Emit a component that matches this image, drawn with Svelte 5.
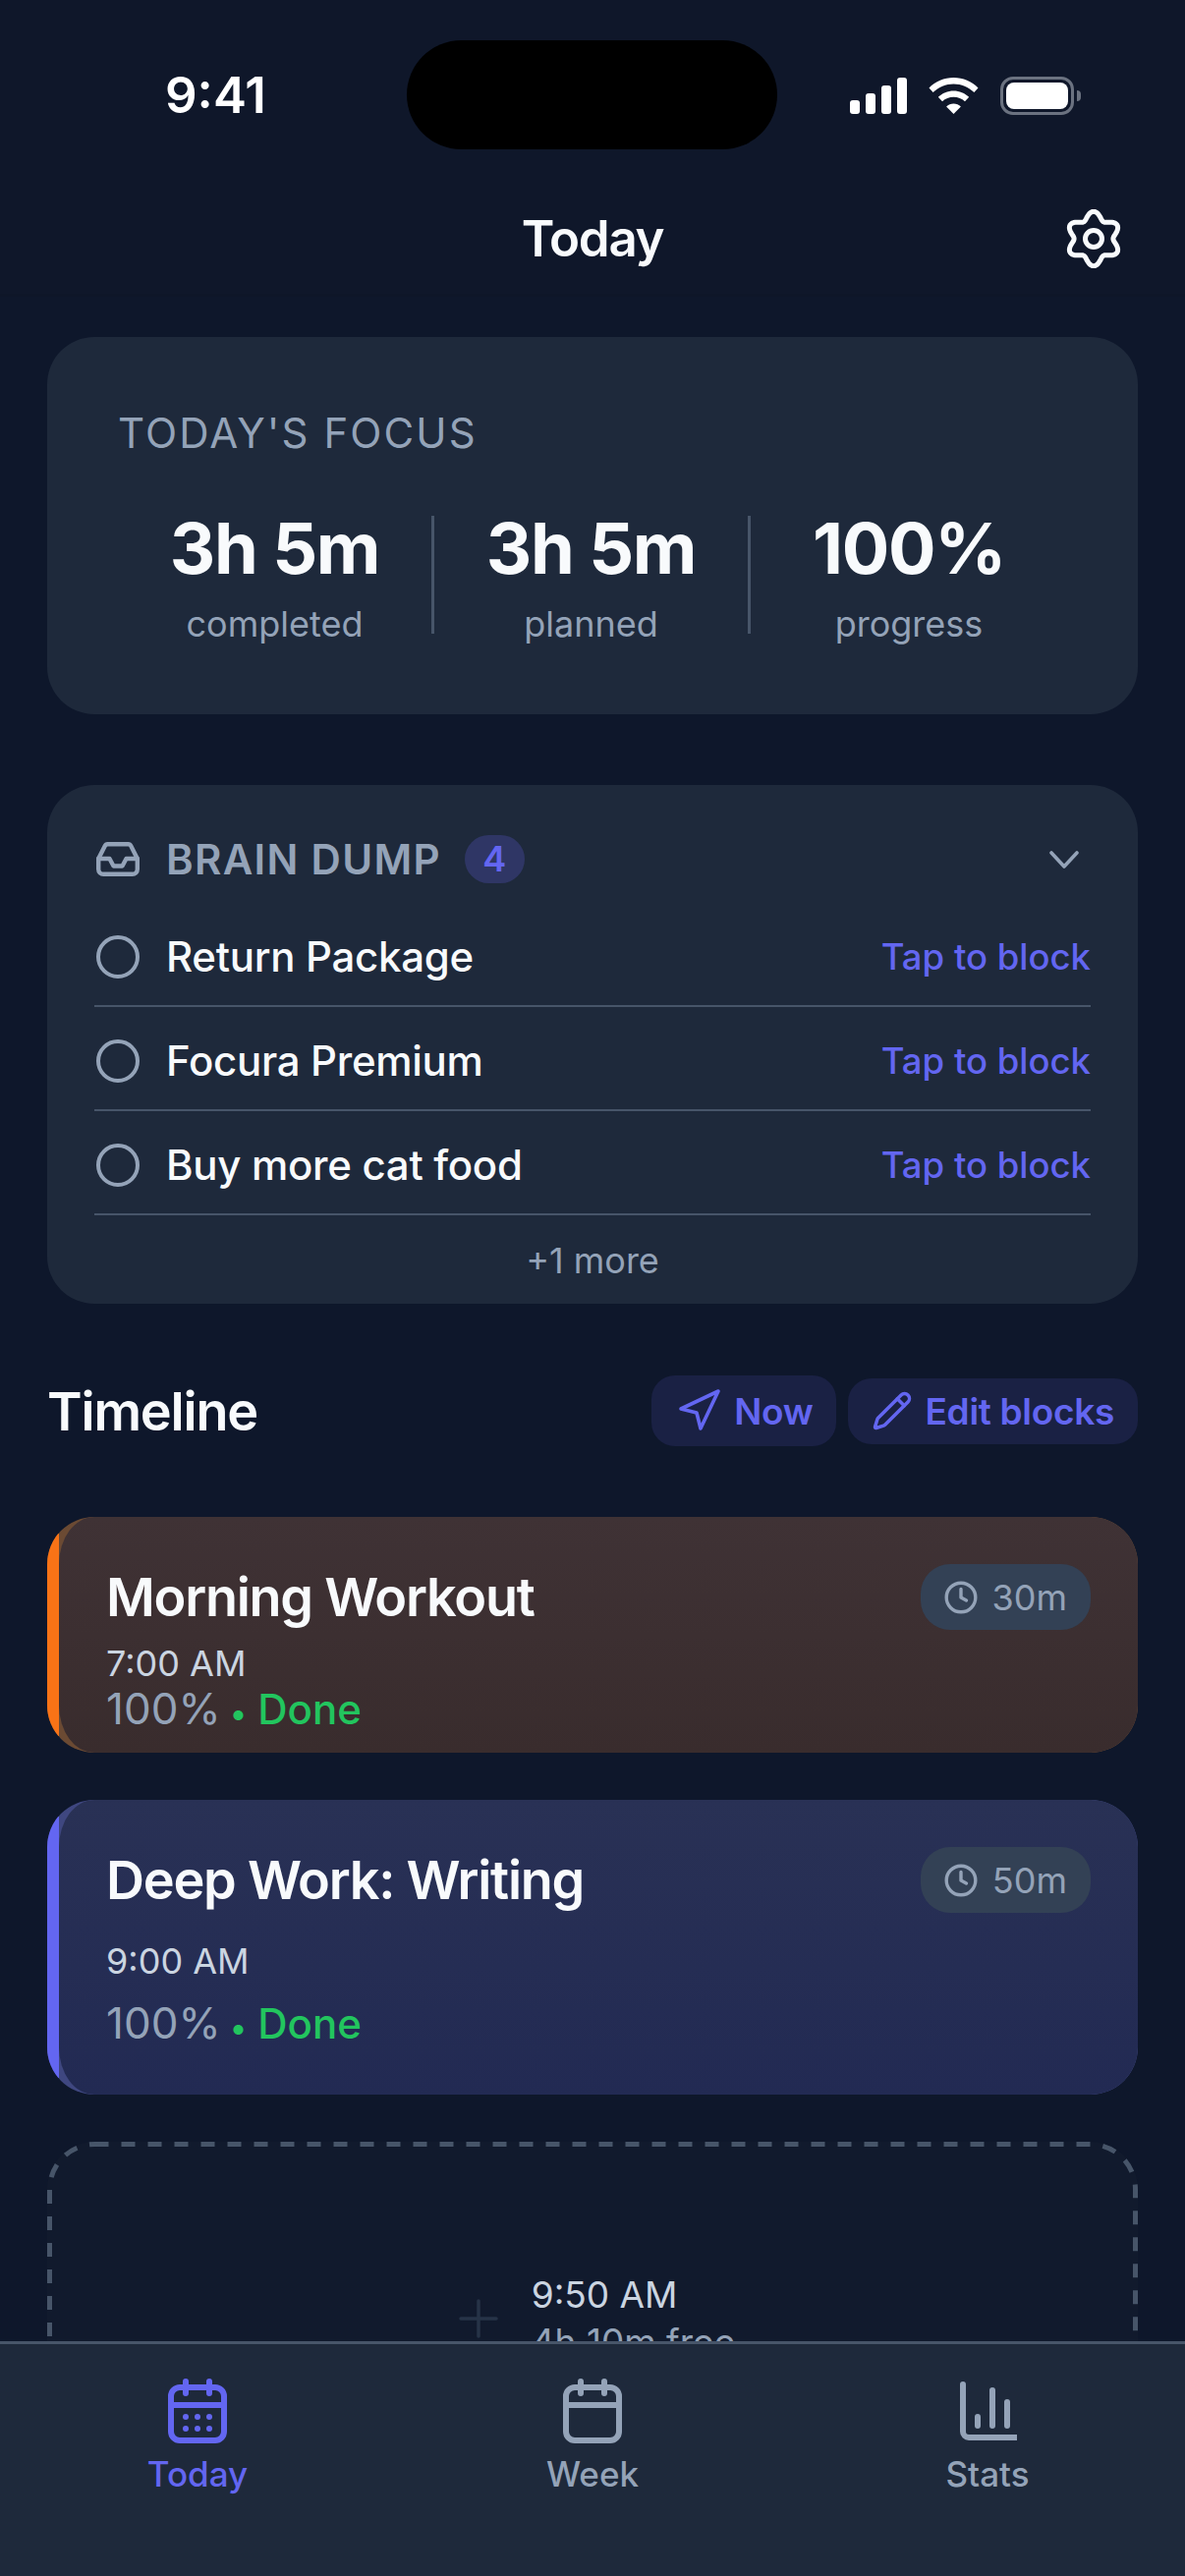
<script>
	const stats = [
		{ value: '3h 5m', label: 'completed' },
		{ value: '3h 5m', label: 'planned' },
		{ value: '100%', label: 'progress' }
	];
	const dumps = ['Return Package', 'Focura Premium', 'Buy more cat food'];

	// six lobed gear outline, lobes at top and bottom
	function gearPath() {
		const pts = [];
		for (let i = 0; i < 120; i++) {
			const t = (i / 120) * Math.PI * 2;
			const r = 23.8 + 3.9 * Math.cos(6 * t);
			pts.push((30 + r * Math.sin(t)).toFixed(2) + ' ' + (30 - r * Math.cos(t)).toFixed(2));
		}
		return 'M' + pts.join('L') + 'Z';
	}
	const gear = gearPath();
</script>

{#snippet clock()}
	<svg class="clock" viewBox="0 0 34 34" fill="none" stroke="currentColor" stroke-width="3.4" stroke-linecap="round" stroke-linejoin="round">
		<circle cx="17" cy="17" r="14.8" />
		<path d="M17 8.5V17l5.5 3" />
	</svg>
{/snippet}

<div class="phone">
	<div class="status">
		<span class="time">9:41</span>
		<div class="island"></div>
		<div class="status-icons">
			<svg width="58" height="37" viewBox="0 0 58 37" fill="#fff">
				<rect x="0" y="23" width="10" height="14" rx="3" />
				<rect x="16" y="16" width="10" height="21" rx="3" />
				<rect x="32" y="8" width="10" height="29" rx="3" />
				<rect x="48" y="0" width="10" height="37" rx="3" />
			</svg>
			<svg width="51" height="37" viewBox="0 0 51 37" fill="#fff">
				<path d="M25.5 0C35 0 44 3.8 50.5 10.5L46.4 15C40.8 9.5 33.4 6.4 25.5 6.4S10.2 9.5 4.6 15L.5 10.5C7 3.8 16 0 25.5 0z" />
				<path d="M25.5 13.4c6 0 11.5 2.3 15.7 6.4l-4.2 4.5c-3-3-7.1-4.6-11.5-4.6s-8.500 1.600-11.500 4.600l-4.200-4.500C14 15.700 19.500 13.400 25.500 13.400z" />
				<path d="M25.500 26.500c2.800 0 5.400 1 7.400 2.900L25.500 37l-7.400-7.600c2-1.900 4.600-2.900 7.400-2.900z" />
			</svg>
			<div class="battery"><div class="battery-fill"></div></div>
			<div class="battery-cap"></div>
		</div>
	</div>

	<header class="nav">
		<h1>Today</h1>
		<svg class="gear" viewBox="0 0 60 60" fill="none" stroke="#f8fafc" stroke-width="5">
			<path d={gear} stroke-linejoin="round" />
			<circle cx="30" cy="30" r="8.5" />
		</svg>
	</header>

	<main class="scroll">
		<section class="card focus">
			<div class="focus-title">TODAY'S FOCUS</div>
			<div class="stats">
				{#each stats as s}
					<div class="stat">
						<div class="stat-value">{s.value}</div>
						<div class="stat-label">{s.label}</div>
					</div>
				{/each}
			</div>
		</section>

		<section class="card dump">
			<div class="dump-head">
				<svg class="inbox" viewBox="0 0 44 35" fill="none" stroke="#94a3b8" stroke-width="4.4" stroke-linejoin="round" stroke-linecap="round">
					<path d="M11.500 2.200h21a3 3 0 0 1 2.700 1.700L41.800 17v10.800a5 5 0 0 1-5 5H7.200a5 5 0 0 1-5-5V17L8.800 3.900a3 3 0 0 1 2.700-1.700z" />
					<path d="M2.200 17h11.300l4 7.500h9l4-7.500h11.300" />
				</svg>
				<span class="dump-title">BRAIN DUMP</span>
				<span class="badge">4</span>
				<svg class="chevron" viewBox="0 0 30 18" fill="none" stroke="#94a3b8" stroke-width="3.6" stroke-linecap="round" stroke-linejoin="round">
					<path d="M2 2l13 14L28 2" />
				</svg>
			</div>
			{#each dumps as d}
				<div class="dump-row">
					<span class="radio"></span>
					<span class="dump-name">{d}</span>
					<span class="tap">Tap to block</span>
				</div>
			{/each}
			<div class="more">+1 more</div>
		</section>

		<div class="timeline-head">
			<h2>Timeline</h2>
			<div class="actions">
				<button class="act now">
					<svg width="48" height="48" viewBox="0 0 24 24" fill="none" stroke="currentColor" stroke-width="1.800" stroke-linecap="round" stroke-linejoin="round">
						<polygon points="3 11 22 2 13 21 11 13 3 11" />
					</svg>
					Now
				</button>
				<button class="act edit">
					<svg width="42" height="42" viewBox="0 0 24 24" fill="none" stroke="currentColor" stroke-width="2" stroke-linecap="round" stroke-linejoin="round">
						<path d="M21.174 6.812a1 1 0 0 0-3.986-3.987L3.842 16.174a2 2 0 0 0-.5.83l-1.321 4.352a.5.5 0 0 0 .623.622l4.353-1.32a2 2 0 0 0 .83-.497z" />
						<path d="m15 5 4 4" />
					</svg>
					Edit blocks
				</button>
			</div>
		</div>

		<article class="block workout">
			<span class="accent"></span>
			<div class="block-body">
				<div class="block-top">
					<div class="block-title">Morning Workout</div>
					<div class="pill">{@render clock()}<span>30m</span></div>
				</div>
				<div class="block-time">7:00 AM</div>
				<div class="block-progress"><span class="pct">100%</span> <i>•</i> <b>Done</b></div>
			</div>
		</article>

		<article class="block writing">
			<span class="accent"></span>
			<div class="block-body">
				<div class="block-top">
					<div class="block-title">Deep Work: Writing</div>
					<div class="pill">{@render clock()}<span>50m</span></div>
				</div>
				<div class="block-time">9:00 AM</div>
				<div class="block-progress"><span class="pct">100%</span> <i>•</i> <b>Done</b></div>
			</div>
		</article>

		<div class="free">
			<svg class="dashes" viewBox="0 0 1110 360" fill="none">
				<rect x="2.500" y="2.500" width="1105" height="355" rx="46" stroke="#475569" stroke-width="5" stroke-dasharray="14 13" />
			</svg>
			<svg class="plus" viewBox="0 0 42 42" stroke="#263347" stroke-width="3.500" stroke-linecap="round">
				<path d="M21 3v36M3 21h36" />
			</svg>
			<div class="free-text">
				<div class="free-time">9:50 AM</div>
				<div class="free-len">4h 10m free</div>
			</div>
		</div>
	</main>

	<nav class="tabs">
		<div class="tab active">
			<svg width="60" height="66" viewBox="0 0 60 66" fill="none" stroke="currentColor" stroke-width="6" stroke-linecap="round">
				<rect x="3" y="9" width="54" height="54" rx="9" />
				<path d="M18 3v12M42 3v12" />
				<path d="M3 27h54" stroke-linecap="butt" />
				<g fill="currentColor" stroke="none">
					<circle cx="18" cy="39" r="3" /><circle cx="30" cy="39" r="3" /><circle cx="42" cy="39" r="3" />
					<circle cx="18" cy="51" r="3" /><circle cx="30" cy="51" r="3" /><circle cx="42" cy="51" r="3" />
				</g>
			</svg>
			<span>Today</span>
		</div>
		<div class="tab">
			<svg width="60" height="66" viewBox="0 0 60 66" fill="none" stroke="currentColor" stroke-width="6" stroke-linecap="round">
				<rect x="3" y="9" width="54" height="54" rx="9" />
				<path d="M18 3v12M42 3v12" />
				<path d="M3 27h54" stroke-linecap="butt" />
			</svg>
			<span>Week</span>
		</div>
		<div class="tab">
			<svg width="60" height="66" viewBox="0 0 60 66" fill="none" stroke="currentColor" stroke-width="6" stroke-linecap="round">
				<path d="M5 6v48a6 6 0 0 0 6 6h48" stroke-linejoin="round" />
				<path d="M20 39v9M35 12v36M50 24v24" />
			</svg>
			<span>Stats</span>
		</div>
	</nav>
</div>

<style>
	:global(body) {
		margin: 0;
		background: #0f172a;
	}

	.phone {
		width: 1206px;
		height: 2622px;
		display: flex;
		flex-direction: column;
		position: relative;
		overflow: hidden;
		background: #0f172a;
		color: #f8fafc;
		font-family: Inter, 'Noto Sans', sans-serif;
	}

	/* status bar */
	.status {
		height: 184px;
		flex-shrink: 0;
		display: flex;
		justify-content: space-between;
		align-items: flex-start;
		padding: 66px 106px 0 168px;
		box-sizing: border-box;
	}

	.time {
		font-size: 51px;
		line-height: 62px;
		font-weight: 600;
		color: #fff;
	}

	.island {
		position: absolute;
		left: 414px;
		top: 41px;
		width: 377px;
		height: 111px;
		border-radius: 56px;
		background: #000;
	}

	.status-icons {
		display: flex;
		align-items: center;
		margin-top: 12px;
		gap: 22px;
	}

	.battery {
		width: 75px;
		height: 39px;
		box-sizing: border-box;
		border: 3px solid #6b7280;
		border-radius: 13px;
		padding: 3px;
	}

	.battery-fill {
		height: 100%;
		background: #fff;
		border-radius: 8px;
	}

	.battery-cap {
		width: 4px;
		height: 11px;
		margin-left: -19px;
		background: #6b7280;
		border-radius: 0 4px 4px 0;
	}

	.nav {
		height: 118px;
		flex-shrink: 0;
		position: relative;
		display: flex;
		align-items: center;
		justify-content: center;
		border-bottom: 3px solid #0e1628;
		box-sizing: border-box;
		padding-top: 3px;
	}

	.nav h1 {
		margin: 0;
		font-size: 51px;
		font-weight: 600;
		line-height: 62px;
		letter-spacing: -1.3px;
	}

	.gear {
		position: absolute;
		right: 63px;
		top: 29px;
		width: 60px;
		height: 60px;
	}

	.scroll {
		flex: 1;
		min-height: 0;
		overflow: hidden;
		padding: 41px 48px 0;
		background: #0e172b;
	}

	.card {
		background: #1e293b;
		border-radius: 48px;
	}

	/* today's focus */
	.focus {
		height: 384px;
		box-sizing: border-box;
		padding: 72px 72px 0;
	}

	.focus-title {
		font-size: 42px;
		line-height: 51px;
		letter-spacing: 2.100px;
		color: #94a3b8;
	}

	.stats {
		display: grid;
		grid-template-columns: repeat(3, 1fr);
		margin: 59px 0 0;
		width: 966px;
	}

	.stat {
		height: 120px;
		text-align: center;
		border-right: 3px solid #475569;
	}

	.stat:last-child {
		border-right: none;
	}

	.stat-value {
		font-size: 72px;
		line-height: 66px;
		font-weight: 700;
		letter-spacing: -1.300px;
		color: #f8fafc;
	}

	.stat-label {
		margin-top: 20px;
		font-size: 36px;
		line-height: 48px;
		color: #94a3b8;
	}

	/* brain dump */
	.dump {
		margin-top: 72px;
		height: 528px;
		box-sizing: border-box;
		padding: 51px 48px 0;
	}

	.dump-head {
		display: flex;
		align-items: center;
		height: 49px;
		margin-bottom: 20px;
	}

	.inbox {
		width: 44px;
		height: 35px;
		margin-left: 2px;
	}

	.dump-title {
		margin-left: 27px;
		font-size: 42px;
		font-weight: 600;
		letter-spacing: 1.300px;
		color: #94a3b8;
	}

	.badge {
		margin-left: 24px;
		width: 61px;
		height: 49px;
		border-radius: 25px;
		background: #2f3665;
		color: #6366f1;
		font-size: 36px;
		font-weight: 600;
		line-height: 49px;
		text-align: center;
	}

	.chevron {
		width: 30px;
		height: 18px;
		margin-left: auto;
		margin-right: 12px;
	}

	.dump-row {
		display: flex;
		align-items: center;
		height: 106px;
		box-sizing: border-box;
		border-bottom: 2px solid #475569;
		padding-top: 5px;
	}

	.radio {
		width: 44px;
		height: 44px;
		margin-left: 2px;
		box-sizing: border-box;
		border: 4px solid #94a3b8;
		border-radius: 50%;
	}

	.dump-name {
		margin-left: 27px;
		font-size: 42px;
		font-weight: 500;
		letter-spacing: -0.300px;
		color: #f8fafc;
	}

	.tap {
		margin-left: auto;
		font-size: 36.500px;
		font-weight: 500;
		color: #6366f1;
	}

	.more {
		margin-top: 22px;
		text-align: center;
		font-size: 36px;
		line-height: 48px;
		color: #94a3b8;
	}

	/* timeline */
	.timeline-head {
		display: flex;
		justify-content: space-between;
		align-items: center;
		margin-top: 73px;
		height: 72px;
	}

	.timeline-head h2 {
		margin: 0;
		font-size: 54px;
		font-weight: 600;
		letter-spacing: -1.200px;
		color: #f8fafc;
	}

	.actions {
		display: flex;
		align-items: center;
		gap: 12px;
	}

	.act {
		display: flex;
		align-items: center;
		gap: 12px;
		padding: 0 24px;
		border: none;
		border-radius: 24px;
		background: #1a2144;
		color: #6366f1;
		font-family: inherit;
		font-size: 37px;
		font-weight: 600;
		letter-spacing: -0.300px;
	}

	.now {
		height: 72px;
	}

	.edit {
		height: 67px;
	}

	.block {
		position: relative;
		overflow: hidden;
		border-radius: 48px;
	}

	.accent {
		position: absolute;
		left: 0;
		top: 17px;
		bottom: 17px;
		width: 12px;
	}

	.block-body {
		height: 100%;
		margin-left: 12px;
		padding: 48px 48px 0;
		box-sizing: border-box;
		border-radius: 36px 48px 48px 36px / 48px;
	}

	.workout {
		margin-top: 72px;
		height: 240px;
		background: #6b4a33;
	}

	.workout .accent {
		background: #f97316;
	}

	.workout .block-body {
		background: linear-gradient(#3f3235, #392c2d);
	}

	.writing {
		margin-top: 48px;
		height: 300px;
		background: #3f4780;
	}

	.writing .accent {
		background: #6366f1;
	}

	.writing .block-body {
		background: linear-gradient(#293155, #222a53);
	}

	.block-top {
		display: flex;
		justify-content: space-between;
		align-items: center;
		height: 67px;
	}

	.block-title {
		font-size: 54px;
		font-weight: 600;
		letter-spacing: -1.250px;
		color: #f8fafc;
	}

	.pill {
		display: flex;
		align-items: center;
		gap: 15px;
		height: 67px;
		box-sizing: border-box;
		padding: 0 24px;
		border-radius: 30px;
		background: #334155;
		color: #94a3b8;
		font-size: 36px;
	}

	.clock {
		width: 34px;
		height: 34px;
	}

	.block-time {
		margin-top: 25px;
		font-size: 36px;
		line-height: 48px;
		color: #cbd5e1;
	}

	.block-progress {
		margin-top: 15px;
		font-size: 42px;
		line-height: 48px;
		color: #94a3b8;
	}

	.pct {
		font-size: 44px;
		margin-right: -3px;
	}

	.block-progress i {
		font-style: normal;
		color: #22c55e;
		font-size: 32px;
		margin-right: -1px;
	}

	.block-progress b {
		font-weight: 500;
		color: #22c55e;
	}

	.workout .block-time {
		margin-top: 10px;
	}

	.workout .block-progress {
		margin-top: -2px;
	}

	.free {
		position: relative;
		margin-top: 48px;
		height: 360px;
		display: flex;
		align-items: center;
		justify-content: center;
		gap: 33px;
		padding-left: 8px;
		box-sizing: border-box;
		border-radius: 48px;
		background: #111a2d;
	}

	.dashes {
		position: absolute;
		inset: 0;
		width: 100%;
		height: 100%;
	}

	.plus {
		width: 42px;
		height: 42px;
	}

	.free-time {
		font-size: 37px;
		line-height: 48px;
		color: #cbd5e1;
	}

	.free-len {
		font-size: 37px;
		line-height: 48px;
		color: #94a3b8;
	}

	/* tab bar */
	.tabs {
		height: 239px;
		flex-shrink: 0;
		box-sizing: border-box;
		display: grid;
		grid-template-columns: repeat(3, 1fr);
		border-top: 3px solid #475569;
		padding-top: 35px;
		background: #1e293b;
	}

	.tab {
		display: flex;
		flex-direction: column;
		align-items: center;
		gap: 7px;
		color: #94a3b8;
	}

	.tab.active {
		color: #6366f1;
	}

	.tab span {
		font-size: 35px;
		line-height: 48px;
		font-weight: 500;
	}
</style>
